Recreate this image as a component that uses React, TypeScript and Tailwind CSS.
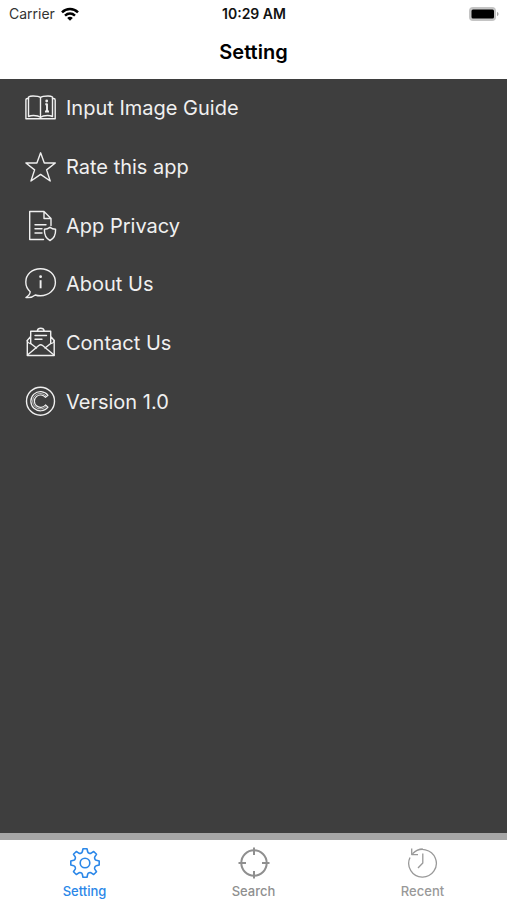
import type { ReactNode } from "react";

type IconProps = { children: ReactNode };

function RowIcon({ children }: IconProps) {
  return (
    <svg
      viewBox="0 0 32 32"
      className="w-8 h-8 shrink-0 overflow-visible"
      fill="none"
      stroke="currentColor"
      strokeWidth="1.4"
      strokeLinejoin="round"
      strokeLinecap="round"
      aria-hidden="true"
    >
      {children}
    </svg>
  );
}

function TabIcon({ children }: IconProps) {
  return (
    <svg
      viewBox="0 0 32 32"
      className="w-8 h-8 shrink-0"
      fill="none"
      stroke="currentColor"
      strokeWidth="1.3"
      strokeLinejoin="round"
      aria-hidden="true"
    >
      {children}
    </svg>
  );
}

const items = [
  {
    label: "Input Image Guide",
    icon: (
      <RowIcon>
        <path d="M15.5 5.500C14 4.200 11 4 8 4 6 4 4.500 4.300 3.500 5V24.500C5 23.800 6.500 23.500 8.500 23.500 11.500 23.500 14 24 15.500 25.200 17 24 19.500 23.500 22.500 23.500 24.500 23.500 26 23.800 27.500 24.500V5C26.500 4.300 25 4 23 4 20 4 17 4.200 15.500 5.500Z" />
        <path d="M15.500 5.500V26M3.500 6.500H2.500C1.500 6.500.9 7 .9 8V26.800H30.200V8C30.200 7 29.500 6.500 28.500 6.500H27.500" />
        <path d="M20.300 12.300H22V19.500M20 19.500H24" strokeWidth="1.900" strokeLinecap="butt" />
        <circle cx="21.700" cy="9" r="1.400" fill="currentColor" stroke="none" />
      </RowIcon>
    ),
  },
  {
    label: "Rate this app",
    icon: (
      <RowIcon>
        <path d="M15.600 1.800 19.300 12H30.300L21.600 18.900 25.200 30 15.600 23.400 6 30 9.600 18.900.9 12H11.900Z" />
      </RowIcon>
    ),
  },
  {
    label: "App Privacy",
    icon: (
      <RowIcon>
        <path d="M18.500 29.500H4.700V1.500H19L26 8.500V15.500M19 1.500V8.500H26" />
        <path d="M10 14.800H21M10 18.800H17M10 23H17" />
        <path d="M25 17.300C23.300 18.800 21.500 19.300 19.400 19.300 19.200 25 20.800 28.500 25 30.500 29.200 28.500 30.800 25 30.600 19.300 28.500 19.300 26.700 18.800 25 17.300Z" />
      </RowIcon>
    ),
  },
  {
    label: "About Us",
    icon: (
      <RowIcon>
        <path d="M15.500.7C7 .7.8 6.500.8 14 .8 18 2.500 21.300 5.200 23.700 5 26.300 3.500 28 .9 29.500 4.500 30 8 29 10.300 27 12 27.600 13.700 27.800 15.500 27.800 24 27.800 30.400 21.800 30.400 14.200S24 .7 15.500.7Z" />
        <path d="M15.600 12.200V20.300" strokeWidth="1.900" strokeLinecap="butt" />
        <circle cx="15.600" cy="8.700" r="1.400" fill="currentColor" stroke="none" />
      </RowIcon>
    ),
  },
  {
    label: "Contact Us",
    icon: (
      <RowIcon>
        <path d="M5.700 9.500 2.300 13.500V28.500H29.200V13.500L25.700 9.500M5.700 16.500V4.200H25.700V16.500M12.200 4.200C12.500 2.300 14 1.300 15.700 1.300S19 2.300 19.300 4.200" />
        <path d="M2.300 13.500C2.300 15 4 16.500 5.700 16.500L11.500 21M29.200 13.500C29.200 15 27.500 16.500 25.700 16.500L20 21M2.500 28 13.800 18.500C15 17.600 16.400 17.600 17.600 18.500L29 28" />
        <path d="M10 8.500H21.500M10 12.200H17" />
      </RowIcon>
    ),
  },
  {
    label: "Version 1.0",
    icon: (
      <RowIcon>
        <circle cx="15.500" cy="15.200" r="14" />
        <path d="M23 9.300A9.600 9.600 0 1 0 23 21.100L20.500 19A6.200 6.200 0 1 1 20.500 11.400Z" strokeWidth="1.200" />
        <path d="M21.600 10.400A7.800 7.800 0 1 0 21.600 20" strokeWidth="0.700" />
      </RowIcon>
    ),
  },
];

const tabs = [
  {
    label: "Setting",
    color: "text-[#2b87e8]",
    icon: (
      <TabIcon>
        <path
          strokeWidth="1.600"
          d="M14 1.800H18L18.700 4.800C19 6 21 6.800 22.100 6.200L24.700 4.500 27.500 7.300 25.800 9.900C25.200 11 26 13 27.200 13.300L30.200 14V18L27.200 18.700C26 19 25.200 21 25.800 22.100L27.500 24.700 24.700 27.500 22.100 25.800C21 25.200 19 26 18.700 27.200L18 30.200H14L13.300 27.200C13 26 11 25.200 9.900 25.800L7.300 27.500 4.500 24.700 6.200 22.100C6.800 21 6 19 4.800 18.700L1.800 18V14L4.800 13.300C6 13 6.800 11 6.200 9.900L4.500 7.300 7.300 4.500 9.900 6.200C11 6.800 13 6 13.300 4.800Z"
        />
        <circle cx="16" cy="16" r="4.800" strokeWidth="1.600" />
      </TabIcon>
    ),
  },
  {
    label: "Search",
    color: "text-[#8f8f8f]",
    icon: (
      <TabIcon>
        <circle cx="16" cy="16" r="12.700" strokeWidth="2" />
        <path d="M16 .5V8M16 24V31.500M.5 16H8M24 16H31.500" strokeWidth="2" />
      </TabIcon>
    ),
  },
  {
    label: "Recent",
    color: "text-[#999999]",
    icon: (
      <TabIcon>
        <path d="M3 10.500A13.800 13.800 0 1 0 5.800 6.500C8.500 3.600 12 2 15.800 2" />
        <path d="M4.700 1.500V7.600H11M15.800 6.500V16L11 21" />
      </TabIcon>
    ),
  },
];

function StatusBar() {
  return (
    <div className="grid grid-cols-3 items-center h-7 pl-[9px] pr-2 text-sm leading-4">
      <div className="flex items-center gap-1.5 text-[#333333]">
        <span>Carrier</span>
        <svg viewBox="0 0 18 14" className="w-[18px] h-3.5" fill="none" stroke="#000000" strokeWidth="2.500" aria-hidden="true">
          <path d="M1 5.300C5.500.900 12.500.900 17 5.300" />
          <path d="M4 8.600C7 5.900 11 5.900 14 8.600" />
          <path d="M9 13.700 6.200 10.900C7.800 9.500 10.200 9.500 11.800 10.900Z" fill="#000000" stroke="none" />
        </svg>
      </div>
      <span className="text-center font-semibold text-[#111111] whitespace-nowrap">10:29 AM</span>
      <svg viewBox="0 0 30 14" className="w-[30px] h-3.5 justify-self-end" aria-hidden="true">
        <rect x="0" y="0" width="27" height="14" rx="4" fill="#c4c4c4" />
        <rect x="2.500" y="2.500" width="22.500" height="9" rx="1.500" fill="#000000" />
        <path d="M28 5C30 5.600 30 8.400 28 9Z" fill="#a8a8a8" />
      </svg>
    </div>
  );
}

export default function App() {
  return (
    <div className="w-full min-h-screen flex flex-col bg-white font-['Inter',sans-serif]">
      <header className="shrink-0 h-[79px]">
        <StatusBar />
        <h1 className="pt-2.5 text-center text-xl leading-7 font-semibold text-black">Setting</h1>
      </header>

      <main className="flex-1 bg-[#3e3e3e] border-b-[7px] border-[#a6a6a6]">
        <ul className="grid auto-rows-fr h-[352px]">
          {items.map((item) => (
            <li key={item.label}>
              <button
                type="button"
                className="w-full h-full flex items-center gap-[9px] pl-[25px] text-left text-xl leading-6 text-[#f0f0f0]"
              >
                {item.icon}
                <span>{item.label}</span>
              </button>
            </li>
          ))}
        </ul>
      </main>

      <nav className="shrink-0 h-[60px] grid grid-cols-3">
        {tabs.map((tab) => (
          <button
            key={tab.label}
            type="button"
            className={`flex flex-col items-center gap-1 pt-[7px] text-[13px] leading-4 font-medium ${tab.color}`}
          >
            {tab.icon}
            <span>{tab.label}</span>
          </button>
        ))}
      </nav>
    </div>
  );
}
